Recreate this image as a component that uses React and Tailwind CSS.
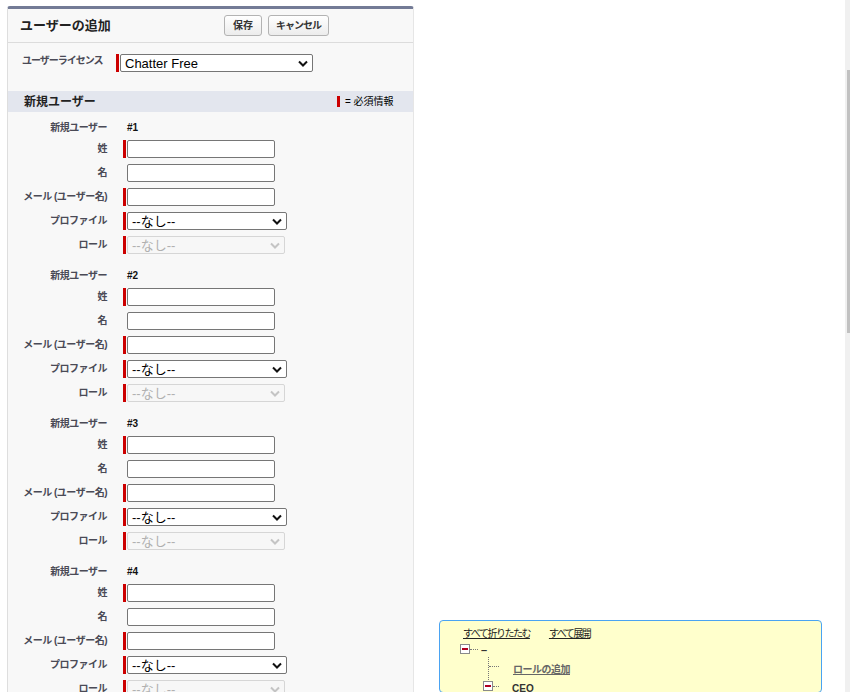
import React from 'react';

const FONT = { fontFamily: '"Liberation Sans", Arial, "Noto Sans CJK JP", sans-serif' };

function Chevron({ disabled }) {
  return (
    <svg width="10" height="7" viewBox="0 0 10 7" className="shrink-0">
      <path d="M1 1.5 L5 5.5 L9 1.5" fill="none" stroke={disabled ? '#c4c4c4' : '#111'} strokeWidth="2" />
    </svg>
  );
}

function FakeSelect({ value, width, disabled }) {
  return (
    <div
      className={`h-[18px] flex items-center justify-between pl-[4px] pr-[4px] rounded-[2px] border ${
        disabled ? 'border-[#d6d6d6] bg-[#f7f7f7] text-[#b0b0b0]' : 'border-[#767676] bg-white text-black'
      } ${width}`}
    >
      <span className="text-[13px] leading-none">{value}</span>
      <Chevron disabled={disabled} />
    </div>
  );
}

function Field({ label, required, children }) {
  return (
    <div className="flex h-[24px]">
      <div className="w-[99px] text-right text-[10px] font-bold text-[#4a4a56] leading-[13px] pt-[2px] tracking-[-0.5px]">{label}</div>
      <div className="w-[20px] flex justify-end">
        {required && <div className="w-[3px] h-[18px] bg-[#c00] mr-[1px]" />}
      </div>
      {children}
    </div>
  );
}

function TextBox() {
  return <div className="w-[148px] h-[18px] border border-[#767676] rounded-[2px] bg-white" />;
}

function UserGroup({ n }) {
  return (
    <div className="pt-[9px]">
      <div className="flex h-[19px]">
        <div className="w-[99px] text-right text-[10px] font-bold text-[#4a4a56] leading-[13px] tracking-[-0.5px]">新規ユーザー</div>
        <div className="w-[20px]" />
        <div className="text-[10px] font-bold text-[#111] leading-[13px]">#{n}</div>
      </div>
      <Field label="姓" required><TextBox /></Field>
      <Field label="名"><TextBox /></Field>
      <Field label="メール (ユーザー名)" required><TextBox /></Field>
      <Field label="プロファイル" required><FakeSelect value="--なし--" width="w-[160px]" /></Field>
      <Field label="ロール" required><FakeSelect value="--なし--" width="w-[158px]" disabled /></Field>
    </div>
  );
}

function TreeBox() {
  return (
    <div className="w-[10px] h-[10px] border border-[#8a8a8a] bg-white flex items-center justify-center shrink-0">
      <div className="w-[6px] h-[2px] bg-[#b00020]" />
    </div>
  );
}

export default function App() {
  return (
    <div className="relative w-[850px] h-[692px] overflow-hidden bg-white flex" style={FONT}>
      {/* left panel */}
      <div className="ml-[7px] mt-[6px] w-[407px] shrink-0">
        <div className="border-t-[3px] border-[#737b96] rounded-t-[3px] border-l border-r border-l-[#dedede] border-r-[#e6e6e6] bg-[#f8f8f8]">
          <div className="h-[34px] flex items-center border-b border-[#dcdcdc] pl-[12px]">
            <div className="text-[13px] font-bold text-[#222] w-[204px]">ユーザーの追加</div>
            <button className="h-[21px] px-[8px] border border-[#b3b3b3] rounded-[3px] bg-gradient-to-b from-white to-[#ececec] text-[10px] font-bold text-[#333]">保存</button>
            <button className="ml-[6px] h-[21px] px-[7px] border border-[#b3b3b3] rounded-[3px] bg-gradient-to-b from-white to-[#ececec] text-[10px] font-bold text-[#333] tracking-[-1px]">キャンセル</button>
          </div>
          <div className="h-[48px] flex pt-[11px]">
            <div className="pl-[14px] w-[108px] text-[10px] font-bold text-[#4a4a56] leading-[13px] tracking-[-1px]">ユーザーライセンス</div>
            <div className="w-[3px] h-[18px] bg-[#c00] mr-[1px]" />
            <FakeSelect value="Chatter Free" width="w-[193px]" />
          </div>
          <div className="h-[21px] bg-[#e3e6ee] flex items-center pl-[16px]">
            <div className="text-[12px] font-bold text-[#222] w-[313px]">新規ユーザー</div>
            <div className="w-[3px] h-[11px] bg-[#c00]" />
            <div className="ml-[5px] text-[10px] text-black">= 必須情報</div>
          </div>
          <UserGroup n={1} />
          <UserGroup n={2} />
          <UserGroup n={3} />
          <UserGroup n={4} />
        </div>
      </div>

      {/* right tree area */}
      <div className="flex-1 flex flex-col">
        <div className="ml-[25px] mt-[620px] w-[383px] h-[120px] border border-[#4aa3f2] rounded-[4px] bg-[#ffffcc] pt-[6px]">
          <div className="flex pl-[23px] text-[10px] text-[#222] leading-[13px] tracking-[-1.5px]">
            <span className="underline">すべて折りたたむ</span>
            <span className="underline ml-[19px]">すべて展開</span>
          </div>
          <div className="flex items-center pl-[20px] mt-[3px] h-[12px]">
            <TreeBox />
            <div className="w-[8px] border-t border-dotted border-[#777]" />
            <span className="ml-[3px] mt-[3px] text-[11px] font-bold text-[#333] leading-none">–</span>
          </div>
          <div className="flex pl-[48px] h-[25px]">
            <div className="w-[1px] border-l border-dotted border-[#777] h-[23px] mt-[2px]" />
            <div className="w-[10px] border-t border-dotted border-[#777] h-0 mt-[11px]" />
            <span className="ml-[14px] mt-[8px] text-[10px] font-bold text-[#666] underline leading-[13px] tracking-[-0.5px]">ロールの追加</span>
          </div>
          <div className="flex items-center pl-[43px] h-[12px]">
            <TreeBox />
            <div className="w-[6px] border-t border-dotted border-[#777]" />
            <span className="ml-[13px] mt-[6px] text-[10px] font-bold text-[#333] leading-none">CEO</span>
          </div>
        </div>
      </div>

      {/* scrollbar */}
      <div className="absolute right-0 top-0 w-[5px] h-[692px] bg-[#f0f0f0]">
        <div className="ml-[2px] mt-[70px] w-[3px] h-[263px] bg-[#c1c1c1]" />
      </div>
    </div>
  );
}
